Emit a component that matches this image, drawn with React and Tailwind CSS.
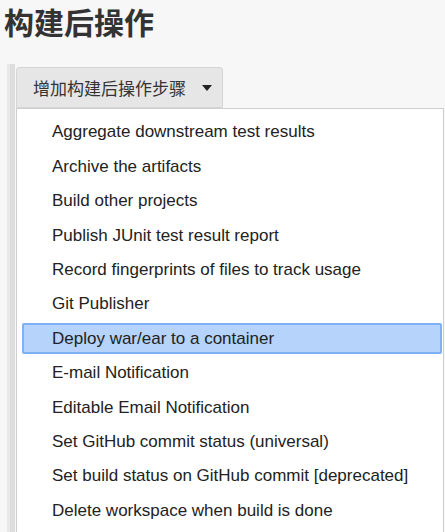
import React from "react";

const items = [
  "Aggregate downstream test results",
  "Archive the artifacts",
  "Build other projects",
  "Publish JUnit test result report",
  "Record fingerprints of files to track usage",
  "Git Publisher",
  "Deploy war/ear to a container",
  "E-mail Notification",
  "Editable Email Notification",
  "Set GitHub commit status (universal)",
  "Set build status on GitHub commit [deprecated]",
  "Delete workspace when build is done",
];

const App = () => {
  const active = 6;
  return (
    <div className="w-[445px] h-[532px] overflow-hidden bg-[#f7f7f7] font-['Liberation_Sans','Noto_Sans_CJK_SC',sans-serif]">
      <h1 className="pl-[4px] pt-[3px] text-[30px] leading-[36px] font-bold text-[#333] font-['Noto_Sans_CJK_SC',sans-serif]">
        构建后操作
      </h1>
      <div className="mt-[25px] flex">
        <div className="ml-[7px] w-[8px] bg-[#dedede] border-l-[3px] border-[#e9e9e9] self-stretch" />
        <div className="flex-1 pl-[1px]">
          <button className="mt-[3px] h-[41px] w-[207px] flex items-center pl-[16px] bg-[#e6e6e6] border border-[#d6d6d6] rounded-t-[3px] text-[17px] text-[#333] font-['Noto_Sans_CJK_SC',sans-serif]">
            增加构建后操作步骤
            <svg className="ml-[16px]" width="10" height="6" viewBox="0 0 10 6">
              <path d="M0 0 L10 0 L5 6 Z" fill="#222" />
            </svg>
          </button>
          <div className="w-[428px] bg-white border border-[#cfcfcf] pt-[6px] pb-[20px] pl-[5px] pr-[1px]">
            {items.map((label, i) => (
              <div key={label} className="h-[34.4px] py-[2px]">
                <div
                  className={`h-full flex items-center pl-[28px] text-[17px] text-[#222] rounded-[2px] border-2 ${
                    i === active
                      ? "bg-[#b5d3fb] border-[#7eb1f3]"
                      : "border-transparent"
                  }`}
                >
                  {label}
                </div>
              </div>
            ))}
          </div>
        </div>
      </div>
    </div>
  );
};

export default App;
